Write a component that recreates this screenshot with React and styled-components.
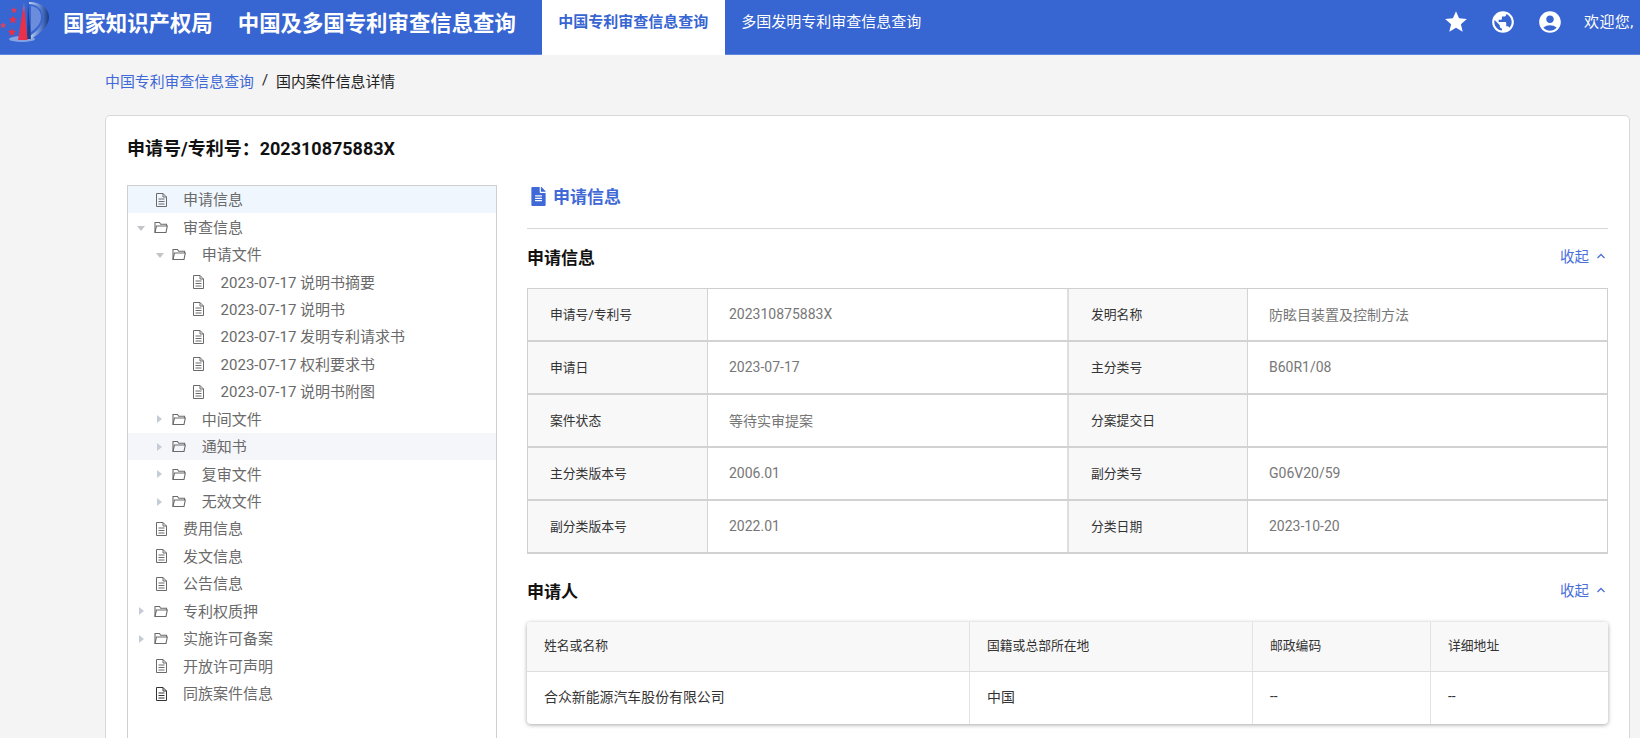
import styled, { createGlobalStyle } from "styled-components";
import { FaFileAlt } from "react-icons/fa";
import { MdStar, MdPublic, MdAccountCircle } from "react-icons/md";

const GlobalStyle = createGlobalStyle`
  html, body {
    margin: 0;
    height: 100%;
    overflow: hidden;
    background: #f4f4f4;
    font-family: Roboto, "Noto Sans CJK SC", sans-serif;
  }
  * {
    box-sizing: border-box;
  }
`;

const Header = styled.header`
  display: flex;
  align-items: center;
  height: 55px;
  background: #3765d1;
  border-bottom: 1px solid #5f85df;
  color: #fff;
  white-space: nowrap;
`;
const Logo = styled.svg`
  width: 52px;
  height: 54px;
  margin-right: 11px;
  flex-shrink: 0;
`;
const BrandTitle = styled.h1`
  margin: 0 ${(p) => p.$gap}px 0 0;
  padding-bottom: 7px;
  font-size: 21.4px;
  font-weight: 700;
  line-height: 30px;
`;
const Tab = styled.a`
  align-self: stretch;
  display: flex;
  align-items: center;
  margin-bottom: -1px;
  padding: 0 16.5px 14px;
  font-size: 15px;
  font-weight: ${(p) => (p.$active ? 600 : 400)};
  background: ${(p) => (p.$active ? "#fff" : "transparent")};
  color: ${(p) => (p.$active ? "#3765d1" : "#fff")};
`;
const HeaderRight = styled.div`
  margin-left: auto;
  display: flex;
  align-items: center;
  gap: 21px;
  width: 197px;
  padding-bottom: 10px;
  font-size: 15px;
  svg {
    flex-shrink: 0;
  }
`;
const Welcome = styled.span`
  margin-bottom: 4px;
  flex-shrink: 0;
  letter-spacing: 0.4px;
`;

const Main = styled.main`
  padding: 15px 10px 0 105px;
`;
const Breadcrumb = styled.nav`
  display: flex;
  align-items: center;
  gap: 8px;
  height: 20px;
  margin-bottom: 25px;
  font-size: 14.9px;
  color: #222;
  a {
    color: #3f69d6;
  }
`;
const Card = styled.section`
  background: #fff;
  border: 1px solid #d8d8d8;
  border-radius: 5px;
  padding: 21px 21px 40px 21px;
`;
const CardTitle = styled.h2`
  margin: 0 0 24px;
  font-size: 18px;
  font-weight: 700;
  line-height: 24px;
  color: #111;
`;
const Columns = styled.div`
  display: flex;
  align-items: flex-start;
  gap: 30px;
`;

const Tree = styled.ul`
  flex: 0 0 370px;
  height: 700px;
  margin: 0;
  padding: 0;
  list-style: none;
  border: 1px solid #cfcfcf;
`;
const TreeRow = styled.li`
  display: flex;
  align-items: center;
  height: 27.45px;
  padding-left: ${(p) => 6 + p.$level * 18.8}px;
  font-size: 15px;
  color: #6a6a6a;
  background: ${(p) =>
    p.$state === "active" ? "#eff6fe" : p.$state === "hover" ? "#f5f6fa" : "transparent"};
`;
const TreeLabel = styled.span`
  padding-bottom: 2px;
`;
const ArrowSlot = styled.span`
  flex: 0 0 14px;
  display: flex;
  justify-content: center;
  margin-right: 5px;
`;
const Arrow = styled.span`
  width: 0;
  height: 0;
  border-style: solid;
  border-color: transparent;
  ${(p) =>
    p.$open
      ? `border-width: 5px 4.5px 0 4.5px; border-top-color: #c2c4c8; margin-top: 2px;`
      : `border-width: 4.5px 0 4.5px 5px; border-left-color: #c5ccd6;`}
`;
const IconSlot = styled.span`
  flex: 0 0 16px;
  display: flex;
  justify-content: center;
  margin-right: 14px;
  color: ${(p) => (p.$dark ? "#333" : "#6a6a6a")};
`;

const Detail = styled.div`
  flex: 1;
  min-width: 0;
`;
const DetailTitle = styled.div`
  display: flex;
  align-items: center;
  gap: 5px;
  height: 44px;
  padding: 0 0 20px 2px;
  border-bottom: 1px solid #d8d8d8;
  font-size: 17px;
  font-weight: 700;
  color: #3f69d6;
  span {
    padding-bottom: 2px;
  }
`;
const SectionHead = styled.div`
  display: flex;
  align-items: center;
  justify-content: space-between;
  height: 24px;
  margin: ${(p) => p.$top}px 0 18px;
`;
const SectionTitle = styled.h3`
  margin: 0;
  padding-bottom: 4px;
  font-size: 17px;
  font-weight: 700;
  color: #111;
`;
const Collapse = styled.a`
  display: flex;
  align-items: center;
  gap: 7px;
  padding: 0 2px 5px 0;
  font-size: 14.5px;
  color: #4a70d8;
`;

const InfoTable = styled.div`
  border-top: 1px solid #cfcfcf;
  border-left: 1px solid #cfcfcf;
  border-right: 1px solid #cfcfcf;
`;
const InfoRow = styled.div`
  display: grid;
  grid-template-columns: 180px 361px 179px 1fr;
  height: 53px;
  border-bottom: 2px solid #d2d2d2;
`;
const InfoLabel = styled.div`
  display: flex;
  align-items: center;
  padding: 0 0 2px 22px;
  background: #f8f8f8;
  font-size: 12.8px;
  color: #333;
  border-right: 1px solid #d4d4d4;
`;
const InfoValue = styled.div`
  display: flex;
  align-items: center;
  padding: 0 0 2px 21px;
  font-size: 14px;
  color: #777;
  border-right: ${(p) => (p.$last ? "none" : "2px solid #dedede")};
`;

const PeopleTable = styled.table`
  width: 100%;
  border-collapse: separate;
  border-spacing: 0;
  table-layout: fixed;
  border-radius: 4px;
  box-shadow: 0 1px 4px rgba(0, 0, 0, 0.35);
  th,
  td {
    padding: 0 0 4px 17px;
    text-align: left;
    color: #333;
    border-right: 1px solid #e2e2e2;
  }
  th:last-child,
  td:last-child {
    border-right: none;
  }
  th {
    height: 50px;
    font-size: 12.8px;
    font-weight: 400;
    background: #f8f8f8;
    border-bottom: 1px solid #dedede;
  }
  th:first-child {
    border-top-left-radius: 4px;
  }
  th:last-child {
    border-top-right-radius: 4px;
  }
  td {
    height: 52px;
    font-size: 13.9px;
  }
`;

const FileIcon = () => (
  <svg width="13" height="14" viewBox="0 0 13 14" fill="none" stroke="currentColor" strokeWidth="1">
    <path d="M1.500 .5h6.500l3.500 3.500v9.500h-10z" />
    <path d="M8 .5v3.500h3.500" />
    <path d="M3.500 6h6M3.500 8.500h6M3.500 11h6" />
  </svg>
);

const FolderIcon = () => (
  <svg width="15" height="13" viewBox="0 0 15 13" fill="none" stroke="currentColor" strokeWidth="1.100">
    <path d="M1 11.500V1.500h4.500l1.200 1.700H12.500v1.800" />
    <path d="M1 11.500h11l1.300-6.500H2.500z" />
  </svg>
);

const treeItems = [
  { label: "申请信息", level: 0, state: "active" },
  { label: "审查信息", level: 0, folder: true, open: true },
  { label: "申请文件", level: 1, folder: true, open: true },
  { label: "2023-07-17 说明书摘要", level: 2 },
  { label: "2023-07-17 说明书", level: 2 },
  { label: "2023-07-17 发明专利请求书", level: 2 },
  { label: "2023-07-17 权利要求书", level: 2 },
  { label: "2023-07-17 说明书附图", level: 2 },
  { label: "中间文件", level: 1, folder: true },
  { label: "通知书", level: 1, folder: true, state: "hover" },
  { label: "复审文件", level: 1, folder: true },
  { label: "无效文件", level: 1, folder: true },
  { label: "费用信息", level: 0 },
  { label: "发文信息", level: 0 },
  { label: "公告信息", level: 0 },
  { label: "专利权质押", level: 0, folder: true },
  { label: "实施许可备案", level: 0, folder: true },
  { label: "开放许可声明", level: 0 },
  { label: "同族案件信息", level: 0, dark: true },
];

const infoRows = [
  ["申请号/专利号", "202310875883X", "发明名称", "防眩目装置及控制方法"],
  ["申请日", "2023-07-17", "主分类号", "B60R1/08"],
  ["案件状态", "等待实审提案", "分案提交日", ""],
  ["主分类版本号", "2006.01", "副分类号", "G06V20/59"],
  ["副分类版本号", "2022.01", "分类日期", "2023-10-20"],
];

function Chevron() {
  return (
    <svg width="10" height="6" viewBox="0 0 10 6" fill="none" stroke="currentColor" strokeWidth="1.300">
      <path d="M1.500 5L5 1.500 8.500 5" />
    </svg>
  );
}

export default function App() {
  return (
    <>
      <GlobalStyle />
      <Header>
        <Logo viewBox="0 0 52 54">
          <defs>
            <linearGradient id="bowl" x1="0" y1="0" x2="1" y2="0">
              <stop offset="0" stopColor="#c5d3f0" />
              <stop offset="0.55" stopColor="#5f83d0" />
              <stop offset="1" stopColor="#173a85" />
            </linearGradient>
            <linearGradient id="wedge" x1="0" y1="0" x2="0" y2="1">
              <stop offset="0" stopColor="#8aa0d8" />
              <stop offset="0.25" stopColor="#e8304a" />
              <stop offset="1" stopColor="#e8304a" />
            </linearGradient>
          </defs>
          <ellipse cx="22" cy="39" rx="13" ry="3" fill="#a9bde9" opacity="0.7" />
          <path d="M29 2C42 2 49 9 49 17c0 10-9 16-18 22l-1-3c7-5 13-11 13-19 0-7-6-13-14-13z" fill="url(#bowl)" />
          <path d="M31 6c6 1 10 5 10 11 0 6-4 11-10 15z" fill="#8fa9e2" opacity="0.6" />
          <path d="M28 3l3 36h-4z" fill="#1b3f8c" />
          <path d="M24 3l3.500 37H18z" fill="url(#wedge)" />
          <path d="M14 7l.9 2.100 2.300.2-1.700 1.500.5 2.200-2-1.200-2 1.200.5-2.200-1.700-1.500 2.300-.2z" fill="#e23a52" />
          <path d="M13 15.500l1.200 2.800 3 .2-2.300 2 .7 2.900-2.600-1.600-2.600 1.600.7-2.900-2.300-2 3-.2z" fill="#e8304a" />
          <path d="M3 22l1 2.200 2.400.2-1.800 1.600.6 2.300-2.200-1.200-2 1.200.6-2.300L0 24.400l2.400-.2z" fill="#d8455f" />
          <path d="M12 28l1.200 2.800 3 .2-2.300 2 .7 2.900-2.600-1.600-2.600 1.600.7-2.900-2.300-2 3-.2z" fill="#e8304a" />
        </Logo>
        <BrandTitle $gap={25}>国家知识产权局</BrandTitle>
        <BrandTitle $gap={26}>中国及多国专利审查信息查询</BrandTitle>
        <Tab $active>中国专利审查信息查询</Tab>
        <Tab>多国发明专利审查信息查询</Tab>
        <HeaderRight>
          <MdStar size={26} />
          <MdPublic size={26} />
          <MdAccountCircle size={26} />
          <Welcome>欢迎您,</Welcome>
        </HeaderRight>
      </Header>
      <Main>
        <Breadcrumb>
          <a>中国专利审查信息查询</a>
          <span>/</span>
          <span>国内案件信息详情</span>
        </Breadcrumb>
        <Card>
          <CardTitle>申请号/专利号：202310875883X</CardTitle>
          <Columns>
            <Tree>
              {treeItems.map((item) => (
                <TreeRow key={item.label} $level={item.level} $state={item.state}>
                  <ArrowSlot>{item.folder && <Arrow $open={item.open} />}</ArrowSlot>
                  <IconSlot $dark={item.dark}>{item.folder ? <FolderIcon /> : <FileIcon />}</IconSlot>
                  <TreeLabel>{item.label}</TreeLabel>
                </TreeRow>
              ))}
            </Tree>
            <Detail>
              <DetailTitle>
                <FaFileAlt size={19} />
                <span>申请信息</span>
              </DetailTitle>
              <SectionHead $top={17}>
                <SectionTitle>申请信息</SectionTitle>
                <Collapse>
                  收起 <Chevron />
                </Collapse>
              </SectionHead>
              <InfoTable>
                {infoRows.map((row) => (
                  <InfoRow key={row[0]}>
                    <InfoLabel>{row[0]}</InfoLabel>
                    <InfoValue>{row[1]}</InfoValue>
                    <InfoLabel>{row[2]}</InfoLabel>
                    <InfoValue $last>{row[3]}</InfoValue>
                  </InfoRow>
                ))}
              </InfoTable>
              <SectionHead $top={26}>
                <SectionTitle>申请人</SectionTitle>
                <Collapse>
                  收起 <Chevron />
                </Collapse>
              </SectionHead>
              <PeopleTable>
                <colgroup>
                  <col style={{ width: 443 }} />
                  <col style={{ width: 283 }} />
                  <col style={{ width: 178 }} />
                  <col style={{ width: 177 }} />
                </colgroup>
                <thead>
                  <tr>
                    <th>姓名或名称</th>
                    <th>国籍或总部所在地</th>
                    <th>邮政编码</th>
                    <th>详细地址</th>
                  </tr>
                </thead>
                <tbody>
                  <tr>
                    <td>合众新能源汽车股份有限公司</td>
                    <td>中国</td>
                    <td>--</td>
                    <td>--</td>
                  </tr>
                </tbody>
              </PeopleTable>
            </Detail>
          </Columns>
        </Card>
      </Main>
    </>
  );
}
